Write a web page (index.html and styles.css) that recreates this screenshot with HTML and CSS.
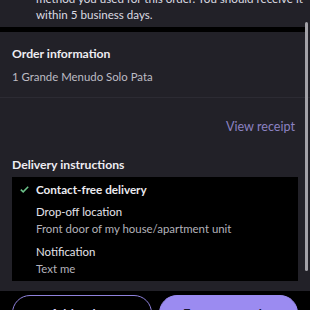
FILE: index.html
```html
<!DOCTYPE html>
<html>
<head>
<meta charset="utf-8">
<link rel="stylesheet" href="styles.css">
</head>
<body>
<div class="screen">
  <div class="intro">
    <div class="intro-line">method you used for this order. You should receive it</div>
    <div class="intro-line">within 5 business days.</div>
  </div>
  <div class="divider-bar"></div>
  <section class="order">
    <h2 class="heading">Order information</h2>
    <div class="item">1 Grande Menudo Solo Pata</div>
  </section>
  <div class="receipt-row"><a class="receipt-link">View receipt</a></div>
  <section class="delivery">
    <h2 class="heading">Delivery instructions</h2>
    <div class="box">
      <div class="contact">
        <svg class="check" width="9" height="7" viewBox="0 0 9 7"><path d="M0.8 3.6 L3.2 5.9 L8.2 0.8" fill="none" stroke="#6cc38a" stroke-width="1.5"/></svg>
        <span>Contact-free delivery</span>
      </div>
      <div class="detail">
        <div class="label">Drop-off location</div>
        <div class="value">Front door of my house/apartment unit</div>
      </div>
      <div class="detail">
        <div class="label">Notification</div>
        <div class="value">Text me</div>
      </div>
    </div>
  </section>
  <div class="footer">
    <button class="btn btn-outline">Add to bag</button>
    <button class="btn btn-fill">Express reorder</button>
  </div>
  <div class="scrollbar"></div>
</div>
</body>
</html>
```
FILE: styles.css
```css
html, body {
  margin: 0;
  padding: 0;
  background: #222128;
}
.screen {
  position: relative;
  width: 310px;
  height: 310px;
  overflow: hidden;
  font-family: "Lato", "Noto Sans", sans-serif;
  color: #e9e8ee;
}
.intro {
  margin-top: -9px;
  padding: 0 8px 4px 36px;
  font-size: 11.6px;
  line-height: 16px;
  color: #dcdbe2;
  white-space: nowrap;
}
.divider-bar {
  height: 5px;
  background: #000;
  margin-right: 5px;
}
.order {
  padding: 12px 12px 10px;
  border-bottom: 1px solid #2c2b33;
}
.heading {
  margin: 0;
  font-size: 12.2px;
  font-weight: 700;
  line-height: 20px;
  color: #eeedf2;
}
.item {
  margin-top: 3px;
  font-size: 11.4px;
  line-height: 20px;
  color: #bdbcc4;
}
.receipt-row {
  display: flex;
  justify-content: flex-end;
  padding: 19px 15px 0;
}
.receipt-link {
  font-size: 12.6px;
  line-height: 20px;
  color: #8b82c2;
}
.delivery {
  padding: 18px 12px 0;
}
.delivery .heading {
  margin-bottom: 2px;
}
.box {
  background: #000;
  padding: 4px 0 4px 0;
  display: flex;
  flex-direction: column;
  gap: 7px;
}
.contact {
  display: flex;
  align-items: center;
  gap: 7px;
  padding-left: 8px;
  font-size: 11.7px;
  font-weight: 700;
  line-height: 16px;
  color: #ecebf0;
}
.check {
  margin-top: 1px;
}
.detail {
  padding-left: 24px;
  font-size: 11.4px;
  line-height: 16px;
}
.label {
  color: #e4e3ea;
}
.value {
  margin-top: 1px;
  color: #b3b2ba;
}
.footer {
  margin-top: 10px;
  background: #000;
  padding: 4px 12px 0;
  display: flex;
  gap: 7px;
  height: 40px;
}
.btn {
  flex: 1;
  height: 38px;
  border-radius: 18px;
  font-family: inherit;
  font-size: 13px;
  font-weight: 700;
  padding: 0;
}
.btn-outline {
  background: transparent;
  border: 1.5px solid #8f82dc;
  color: #d6d0f7;
}
.btn-fill {
  background: #9b8bf1;
  border: 1.5px solid #9b8bf1;
  color: #1b1830;
}
.scrollbar {
  position: absolute;
  left: 305px;
  top: 22px;
  width: 2.5px;
  height: 249px;
  border-radius: 2px;
  background: #a3a2a8;
}
```
